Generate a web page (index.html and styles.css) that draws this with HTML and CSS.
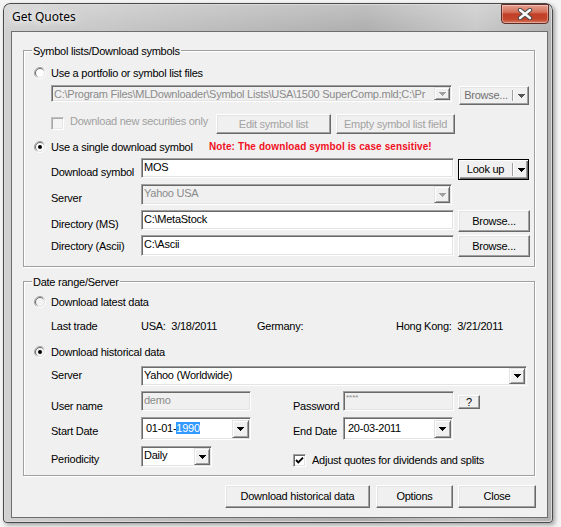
FILE: index.html
```html
<!DOCTYPE html>
<html>
<head>
<meta charset="utf-8">
<title>Get Quotes</title>
<link rel="stylesheet" href="styles.css">
</head>
<body>
<svg class="defs" width="0" height="0" aria-hidden="true">
  <defs>
    <linearGradient id="ringO" x1="0" y1="0" x2="1" y2="1"><stop offset="0.35" stop-color="#a0a0a0"/><stop offset="0.65" stop-color="#ffffff"/></linearGradient>
    <linearGradient id="ringI" x1="0" y1="0" x2="1" y2="1"><stop offset="0.35" stop-color="#696969"/><stop offset="0.65" stop-color="#e3e3e3"/></linearGradient>
  </defs>
</svg>
<div class="window">
  <div class="titlebar">
    <span class="title">Get Quotes</span>
    <div class="close">
      <svg width="16" height="12" viewBox="0 0 16 12"><path d="M3 2 L13 10 M13 2 L3 10" stroke="#4a4a4a" stroke-width="4.4" stroke-linecap="round"/><path d="M3 2 L13 10 M13 2 L3 10" stroke="#ffffff" stroke-width="2.4" stroke-linecap="round"/></svg>
    </div>
  </div>
  <div class="client">
    <div class="group g1">
      <span class="legend">Symbol lists/Download symbols</span>
      <div class="row h16 mt14">
        <svg class="radio" width="12" height="12" viewBox="0 0 12 12"><circle cx="6" cy="6" r="5.5" fill="none" stroke="url(#ringO)"/><circle cx="6" cy="6" r="4.5" fill="#fff" stroke="url(#ringI)"/></svg>
        <span class="rlabel">Use a portfolio or symbol list files</span>
      </div>
      <div class="row h20 mt4 ind">
        <div class="combo dis w401">
          <span class="ctext">C:\Program Files\MLDownloader\Symbol Lists\USA\1500 SuperComp.mld;C:\Pr</span>
          <span class="ddbtn"><svg class="arr" width="7" height="4" viewBox="0 0 7 4"><path d="M0 0h7v1h-1v1h-1v1h-1v1h-1v-1h-1v-1h-1v-1h-1z" fill="#a0a0a0"/></svg></span>
        </div>
        <div class="btn split dis2 w70 h19 ml7 mt1">
          <span class="lbl">Browse...</span><span class="sep"></span>
          <span class="dd"><svg class="arr" width="7" height="4" viewBox="0 0 7 4"><path d="M0 0h7v1h-1v1h-1v1h-1v1h-1v-1h-1v-1h-1v-1h-1z" fill="#555"/></svg></span>
        </div>
      </div>
      <div class="row h20 mt9 ind">
        <div class="chkwrap w165">
          <span class="chk dis mt3"></span>
          <span class="distext">Download new securities only</span>
        </div>
        <div class="btn dis w115 h20">Edit symbol list</div>
        <div class="btn dis w119 h20 ml5">Empty symbol list field</div>
      </div>
      <div class="row h16 mt5">
        <div class="radiowrap w175">
          <svg class="radio" width="12" height="12" viewBox="0 0 12 12"><circle cx="6" cy="6" r="5.5" fill="none" stroke="url(#ringO)"/><circle cx="6" cy="6" r="4.5" fill="#fff" stroke="url(#ringI)"/><circle cx="6" cy="6" r="2" fill="#000"/></svg>
          <span class="rlabel">Use a single download symbol</span>
        </div>
        <span class="note">Note: The download symbol is case sensitive!</span>
      </div>
      <div class="row h22 mt3 ind">
        <span class="flabel pt8">Download symbol</span>
        <div class="field w313 h20">MOS</div>
        <div class="btn split default w71 h21 ml4 mt1">
          <span class="lbl">Look up</span><span class="sep"></span>
          <span class="dd"><svg class="arr" width="7" height="4" viewBox="0 0 7 4"><path d="M0 0h7v1h-1v1h-1v1h-1v1h-1v-1h-1v-1h-1v-1h-1z" fill="#000"/></svg></span>
        </div>
      </div>
      <div class="row h21 mt4 ind">
        <span class="flabel pt8">Server</span>
        <div class="combo dis w311 h21">
          <span class="ctext">Yahoo USA</span>
          <span class="ddbtn"><svg class="arr" width="7" height="4" viewBox="0 0 7 4"><path d="M0 0h7v1h-1v1h-1v1h-1v1h-1v-1h-1v-1h-1v-1h-1z" fill="#a0a0a0"/></svg></span>
        </div>
      </div>
      <div class="row h22 mt5 ind">
        <span class="flabel pt8">Directory (MS)</span>
        <div class="field w313 h20">C:\MetaStock</div>
        <div class="btn w72 h22 ml4">Browse...</div>
      </div>
      <div class="row h22 mt3 ind">
        <span class="flabel pt5">Directory (Ascii)</span>
        <div class="field w313 h21">C:\Ascii</div>
        <div class="btn w72 h22 ml4">Browse...</div>
      </div>
    </div>

    <div class="group g2">
      <span class="legend">Date range/Server</span>
      <div class="row h16 mt12">
        <svg class="radio" width="12" height="12" viewBox="0 0 12 12"><circle cx="6" cy="6" r="5.5" fill="none" stroke="url(#ringO)"/><circle cx="6" cy="6" r="4.5" fill="#f4f4f4" stroke="url(#ringI)"/></svg>
        <span class="rlabel">Download latest data</span>
      </div>
      <div class="row h16 mt8 ind center">
        <span class="flabel">Last trade</span>
        <span class="pre w116">USA:  3/18/2011</span>
        <span class="pre w139">Germany:</span>
        <span class="pre">Hong Kong:  3/21/2011</span>
      </div>
      <div class="row h16 mt10">
        <svg class="radio" width="12" height="12" viewBox="0 0 12 12"><circle cx="6" cy="6" r="5.5" fill="none" stroke="url(#ringO)"/><circle cx="6" cy="6" r="4.5" fill="#f4f4f4" stroke="url(#ringI)"/><circle cx="6" cy="6" r="2" fill="#000"/></svg>
        <span class="rlabel">Download historical data</span>
      </div>
      <div class="row h20 mt6 ind">
        <span class="flabel pt3">Server</span>
        <div class="combo w386 h20">
          <span class="ctext">Yahoo (Worldwide)</span>
          <span class="ddbtn"><svg class="arr" width="7" height="4" viewBox="0 0 7 4"><path d="M0 0h7v1h-1v1h-1v1h-1v1h-1v-1h-1v-1h-1v-1h-1z" fill="#000"/></svg></span>
        </div>
      </div>
      <div class="row h20 mt5 ind">
        <span class="flabel pt9">User name</span>
        <div class="field dis w110 h20">demo</div>
        <span class="flabel pt9 w50 ml42">Password</span>
        <div class="field dis pw w111 h20">****</div>
        <div class="btn w22 h14 ml4 mt4">?</div>
      </div>
      <div class="row h23 mt6 ind">
        <span class="flabel pt8">Start Date</span>
        <div class="picker w110 h23">
          <span class="ptext">01-01-<span class="sel">1990</span></span>
          <span class="pbtn"><svg class="arr" width="7" height="4" viewBox="0 0 7 4"><path d="M0 0h7v1h-1v1h-1v1h-1v1h-1v-1h-1v-1h-1v-1h-1z" fill="#000"/></svg></span>
        </div>
        <span class="flabel pt8 w50 ml42">End Date</span>
        <div class="picker w110 h23">
          <span class="ptext">20-03-2011</span>
          <span class="pbtn"><svg class="arr" width="7" height="4" viewBox="0 0 7 4"><path d="M0 0h7v1h-1v1h-1v1h-1v1h-1v-1h-1v-1h-1v-1h-1z" fill="#000"/></svg></span>
        </div>
      </div>
      <div class="row h21 mt6 ind">
        <span class="flabel pt7">Periodicity</span>
        <div class="combo w71 h21">
          <span class="ctext">Daily</span>
          <span class="ddbtn"><svg class="arr" width="7" height="4" viewBox="0 0 7 4"><path d="M0 0h7v1h-1v1h-1v1h-1v1h-1v-1h-1v-1h-1v-1h-1z" fill="#000"/></svg></span>
        </div>
        <div class="chkwrap ml81 mt8">
          <span class="chk on"><svg width="11" height="11" viewBox="0 0 11 11"><path d="M2 5 L4.3 7.3 L9 2.6" fill="none" stroke="#000" stroke-width="1.9"/></svg></span>
          <span class="clabel">Adjust quotes for dividends and splits</span>
        </div>
      </div>
    </div>

    <div class="buttons">
      <div class="btn w145 h23">Download historical data</div>
      <div class="btn w77 h23 ml6">Options</div>
      <div class="btn w78 h23 ml5">Close</div>
    </div>
  </div>
</div>
</body>
</html>
```
FILE: styles.css
```css
* { box-sizing: border-box; }
html, body { margin: 0; padding: 0; }
body {
  width: 561px;
  height: 527px;
  overflow: hidden;
  background: #f4f4f4;
  font-family: "Liberation Sans", Arial, sans-serif;
  font-size: 11px;
  letter-spacing: -0.25px;
  color: #000;
}
.defs { display: block; width: 0; height: 0; overflow: hidden; }

.window {
  margin: 3px 0 0 3px;
  width: 550px;
  height: 520px;
  border-radius: 7px 7px 4px 4px;
  background:
    linear-gradient(to bottom, rgba(255,255,255,0.25), rgba(255,255,255,0) 30px),
    linear-gradient(to right, #d0d0d0 0%, #bfbfbf 30%, #adadad 66%, #c8c8c8 86%, #b0b0b0 100%);
  box-shadow: inset 0 0 0 1px #4a4a4a, inset 0 0 0 2px #dadada, 2px 2px 4px rgba(0,0,0,0.35);
  display: flex;
  flex-direction: column;
}
.titlebar {
  height: 28px;
  display: flex;
  align-items: flex-start;
  padding-left: 9px;
}
.title {
  font-family: "Noto Sans", "Open Sans", sans-serif;
  font-size: 12px;
  letter-spacing: 0;
  line-height: 28px;
  color: #000;
  text-shadow: 0 0 6px #fff, 0 0 10px rgba(255,255,255,0.9);
}
.close {
  margin-left: auto;
  margin-top: 1px;
  margin-right: 4px;
  width: 48px;
  height: 20px;
  border: 1px solid #5e2e26;
  border-radius: 0 0 4px 4px;
  background: linear-gradient(to bottom, #e6a090 0%, #d4705a 40%, #c23f27 50%, #c4462c 80%, #d67e68 100%);
  box-shadow: inset 0 0 0 1px rgba(255,255,255,0.35);
  display: flex;
  align-items: center;
  justify-content: center;
}

.client {
  margin-left: 8px;
  width: 537px;
  height: 487px;
  background: #f0f0f0;
  box-shadow: inset 0 0 0 1px #6e6e6e;
  padding: 19px 0 0 12px;
  display: flex;
  flex-direction: column;
}

.group {
  position: relative;
  width: 512px;
  border: 1px solid #a0a0a0;
  box-shadow: inset 1px 1px 0 #fff, 1px 1px 0 #fff;
  padding-left: 10px;
  display: flex;
  flex-direction: column;
}
.g1 { height: 217px; }
.g2 { height: 195px; margin-top: 14px; }
.legend {
  position: absolute;
  top: -6px;
  left: 8px;
  padding: 0 1px;
  line-height: 13px;
  background: #f0f0f0;
}

.row { display: flex; align-items: flex-start; flex: none; }
.row.center { align-items: center; }
.ind { padding-left: 17px; }

.radio { flex: none; margin-top: 2px; display: block; }
.radiowrap { display: flex; align-items: flex-start; height: 16px; }
.rlabel { line-height: 16px; margin-left: 5px; white-space: nowrap; }
.note {
  font-weight: bold;
  font-size: 10px;
  letter-spacing: 0.1px;
  color: #f0101e;
  line-height: 16px;
  white-space: nowrap;
}
.flabel { width: 90px; flex: none; line-height: 13px; white-space: nowrap; }
.pre { white-space: pre; line-height: 13px; flex: none; }

.field {
  flex: none;
  background: #fff;
  border: 1px solid;
  border-color: #a0a0a0 #fff #fff #a0a0a0;
  box-shadow: inset 1px 1px 0 #696969, inset -1px -1px 0 #e3e3e3;
  padding: 2px 2px 0 2px;
  line-height: 13px;
  white-space: nowrap;
  overflow: hidden;
}
.field.dis { background: #f0f0f0; color: #8b8b8b; }
.field.pw { font-size: 8px; line-height: 8px; letter-spacing: 0; padding-top: 2px; }

.combo {
  flex: none;
  display: flex;
  align-items: stretch;
  background: #fff;
  border: 1px solid;
  border-color: #a0a0a0 #fff #fff #a0a0a0;
  box-shadow: inset 1px 1px 0 #696969, inset -1px -1px 0 #e3e3e3;
  overflow: hidden;
}
.combo.dis { background: #f0f0f0; color: #8b8b8b; }
.ctext {
  flex: 1;
  min-width: 0;
  overflow: hidden;
  white-space: nowrap;
  padding: 2px 0 0 2px;
  line-height: 13px;
}
.ddbtn {
  flex: none;
  width: 16px;
  margin: 1px 1px 1px 0;
  background: #f0f0f0;
  border: 1px solid;
  border-color: #e3e3e3 #696969 #696969 #e3e3e3;
  box-shadow: inset 1px 1px 0 #fff, inset -1px -1px 0 #a0a0a0;
  display: flex;
  align-items: center;
  justify-content: center;
}
.arr { display: block; shape-rendering: crispEdges; }

.picker {
  flex: none;
  display: flex;
  align-items: flex-start;
  background: #fff;
  border: 1px solid;
  border-color: #a0a0a0 #fff #fff #a0a0a0;
  box-shadow: inset 1px 1px 0 #696969, inset -1px -1px 0 #e3e3e3;
}
.ptext {
  flex: 1;
  padding: 4px 0 0 4px;
  line-height: 13px;
  white-space: nowrap;
}
.sel { background: #3399ff; color: #fff; }
.pbtn {
  flex: none;
  width: 17px;
  height: 18px;
  margin: 2px 1px 0 0;
  background: #f0f0f0;
  border: 1px solid;
  border-color: #e3e3e3 #696969 #696969 #e3e3e3;
  box-shadow: inset 1px 1px 0 #fff, inset -1px -1px 0 #a0a0a0;
  display: flex;
  align-items: center;
  justify-content: center;
}

.btn {
  flex: none;
  display: flex;
  align-items: center;
  justify-content: center;
  background: #f0f0f0;
  border: 1px solid;
  border-color: #fff #696969 #696969 #fff;
  box-shadow: inset -1px -1px 0 #a0a0a0, inset 1px 1px 0 #e3e3e3;
  line-height: 13px;
  white-space: nowrap;
}
.btn.dis { color: #a3a3a3; }
.btn.dis2 { color: #707070; }
.btn.default {
  border-color: #000;
  box-shadow: inset 1px 1px 0 #fff, inset -1px -1px 0 #696969, inset -2px -2px 0 #a0a0a0;
}
.split { justify-content: flex-start; align-items: stretch; }
.split .lbl { flex: 1; min-width: 0; display: flex; align-items: center; justify-content: center; }
.split .sep { flex: none; width: 2px; margin: 3px 0; border-left: 1px solid #a0a0a0; border-right: 1px solid #fff; }
.split .dd { flex: none; width: 14px; display: flex; align-items: center; justify-content: center; }

.chkwrap { display: flex; align-items: flex-start; flex: none; }
.chk {
  flex: none;
  width: 13px;
  height: 13px;
  background: #fff;
  border: 1px solid;
  border-color: #a0a0a0 #fff #fff #a0a0a0;
  box-shadow: inset 1px 1px 0 #696969, inset -1px -1px 0 #e3e3e3;
  display: flex;
  align-items: center;
  justify-content: center;
}
.chk.dis { background: #f4f4f4; border-color: #c0c0c0 #fff #fff #c0c0c0; box-shadow: inset 1px 1px 0 #a8a8a8, inset -1px -1px 0 #e8e8e8; }
.chk svg { display: block; }
.distext { color: #a0a0a0; margin-left: 6px; line-height: 20px; margin-top: -3px; white-space: nowrap; }
.clabel { margin-left: 6px; line-height: 13px; white-space: nowrap; }

.buttons {
  display: flex;
  justify-content: flex-end;
  margin-top: 9px;
  padding-right: 12px;
}

/* sizing and spacing helpers */
.h14 { height: 14px; } .h16 { height: 16px; } .h19 { height: 19px; } .h20 { height: 20px; }
.h21 { height: 21px; } .h22 { height: 22px; } .h23 { height: 23px; }
.mt1 { margin-top: 1px; } .mt3 { margin-top: 3px; } .mt4 { margin-top: 4px; } .mt5 { margin-top: 5px; }
.mt6 { margin-top: 6px; } .mt8 { margin-top: 8px; } .mt9 { margin-top: 9px; } .mt10 { margin-top: 10px; }
.mt12 { margin-top: 12px; } .mt14 { margin-top: 14px; }
.ml4 { margin-left: 4px; } .ml5 { margin-left: 5px; } .ml6 { margin-left: 6px; } .ml7 { margin-left: 7px; }
.ml42 { margin-left: 42px; } .ml81 { margin-left: 81px; }
.w22 { width: 22px; } .w50 { width: 50px; } .w70 { width: 70px; } .w71 { width: 71px; } .w72 { width: 72px; }
.w77 { width: 77px; } .w78 { width: 78px; } .w110 { width: 110px; } .w111 { width: 111px; }
.w115 { width: 115px; } .w116 { width: 116px; } .w119 { width: 119px; } .w139 { width: 139px; }
.w145 { width: 145px; } .w165 { width: 165px; } .w175 { width: 175px; } .w311 { width: 311px; }
.w313 { width: 313px; } .w386 { width: 386px; } .w401 { width: 401px; }
.pt3 { padding-top: 3px; } .pt5 { padding-top: 5px; } .pt7 { padding-top: 7px; } .pt8 { padding-top: 8px; } .pt9 { padding-top: 9px; }
```
